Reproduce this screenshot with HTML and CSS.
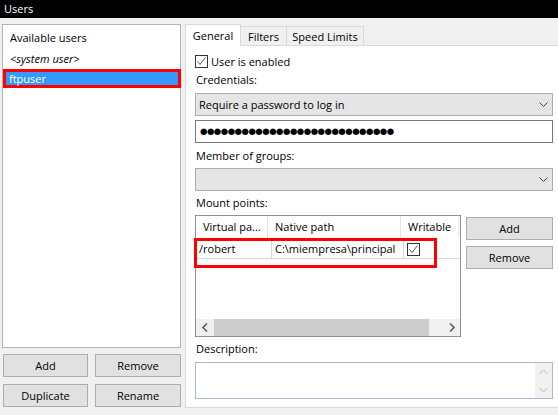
FILE: index.html
```html
<!DOCTYPE html>
<html>
<head>
<meta charset="utf-8">
<link rel="stylesheet" href="styles.css">
</head>
<body>
<div class="titlebar">Users</div>
<div class="main">
  <div class="left">
    <div class="userlist">
      <div class="user-head">Available users</div>
      <div class="user-item italic">&lt;system user&gt;</div>
      <div class="user-item selected">ftpuser</div>
    </div>
    <div class="btngrid">
      <div class="btn">Add</div>
      <div class="btn">Remove</div>
      <div class="btn">Duplicate</div>
      <div class="btn">Rename</div>
    </div>
  </div>
  <div class="right">
    <div class="tabs">
      <div class="tab active">General</div>
      <div class="tab t-filters">Filters</div>
      <div class="tab t-speed">Speed Limits</div>
    </div>
    <div class="panel">
      <div class="chkrow">
        <span class="chk"><svg width="11" height="11" viewBox="0 0 11 11"><polyline points="1.5,5.5 4,8.5 9.5,1.5" fill="none" stroke="#555" stroke-width="1"/></svg></span>
        <span>User is enabled</span>
      </div>
      <div class="label l-cred">Credentials:</div>
      <div class="combo c-first"><span>Require a password to log in</span><svg class="chev" width="9" height="5" viewBox="0 0 9 5"><polyline points="0.5,0.5 4.5,4.5 8.5,0.5" fill="none" stroke="#444" stroke-width="1"/></svg></div>
      <div class="password">●●●●●●●●●●●●●●●●●●●●●●●●●●●●</div>
      <div class="label l-groups">Member of groups:</div>
      <div class="combo c-second"><span></span><svg class="chev" width="9" height="5" viewBox="0 0 9 5"><polyline points="0.5,0.5 4.5,4.5 8.5,0.5" fill="none" stroke="#444" stroke-width="1"/></svg></div>
      <div class="label l-mount">Mount points:</div>
      <div class="mountrow">
        <div class="listview">
          <div class="lv-head">
            <div class="hc hc1">Virtual pa...</div>
            <div class="hc hc2">Native path</div>
            <div class="hc hc3">Writable</div>
          </div>
          <div class="lv-row">
            <div class="rc rc1">/robert</div>
            <div class="rc rc2">C:\miempresa\principal</div>
            <div class="rc rc3"><span class="chk"><svg width="11" height="11" viewBox="0 0 11 11"><polyline points="1.5,5.5 4,8.5 9.5,1.5" fill="none" stroke="#555" stroke-width="1"/></svg></span></div>
          </div>
          <div class="hscroll">
            <div class="sb-arrow"><svg width="6" height="9" viewBox="0 0 6 9"><polyline points="5,0.5 1,4.5 5,8.5" fill="none" stroke="#606060" stroke-width="1.6"/></svg></div>
            <div class="sb-thumb"></div>
            <div class="sb-track"></div>
            <div class="sb-arrow"><svg width="6" height="9" viewBox="0 0 6 9"><polyline points="1,0.5 5,4.5 1,8.5" fill="none" stroke="#606060" stroke-width="1.6"/></svg></div>
          </div>
          <div class="mark-row"></div>
        </div>
        <div class="sidebtns">
          <div class="btn b-add">Add</div>
          <div class="btn b-remove">Remove</div>
        </div>
      </div>
      <div class="label l-desc">Description:</div>
      <div class="textarea">
        <div class="ta-body"></div>
        <div class="vscroll">
          <svg width="9" height="6" viewBox="0 0 9 6"><polyline points="0.5,5 4.5,1 8.5,5" fill="none" stroke="#b8b8b8" stroke-width="1"/></svg>
          <svg width="9" height="6" viewBox="0 0 9 6"><polyline points="0.5,1 4.5,5 8.5,1" fill="none" stroke="#b8b8b8" stroke-width="1"/></svg>
        </div>
      </div>
    </div>
  </div>
</div>
</body>
</html>
```
FILE: styles.css
```css
* { box-sizing: border-box; }
html, body { margin: 0; padding: 0; }
body {
  width: 558px;
  height: 415px;
  overflow: hidden;
  background: #f0f0f0;
  font-family: "Open Sans", "Noto Sans", sans-serif;
  font-size: 11px;
  color: #000;
}
.titlebar {
  height: 18px;
  line-height: 18px;
  background: #000;
  color: #fff;
  padding-left: 4px;
}
.main {
  display: flex;
  gap: 4px;
  padding: 6px 0 0 2px;
}
.left {
  width: 180px;
  display: flex;
  flex-direction: column;
}
.userlist {
  height: 324px;
  background: #fff;
  border: 1px solid #b4b4b4;
  padding-top: 2px;
}
.user-head {
  height: 22px;
  line-height: 22px;
  padding-left: 7px;
}
.user-item {
  height: 20px;
  line-height: 20px;
  padding-left: 7px;
}
.italic { font-style: italic; }
.user-item.selected {
  height: 19px;
  line-height: 13px;
  border: 3px solid #ff0000;
  background: #3399ff;
  color: #fff;
  padding-left: 3px;
  margin-right: -1px;
}
.btngrid {
  display: grid;
  grid-template-columns: 85px 86px;
  grid-auto-rows: 23px;
  column-gap: 7px;
  row-gap: 7px;
  margin-top: 6px;
  padding-left: 1px;
}
.btn {
  background: #e1e1e1;
  border: 1px solid #adadad;
  display: flex;
  align-items: center;
  justify-content: center;
}
.right {
  width: 380px;
  flex: none;
}
.tabs {
  display: flex;
  align-items: flex-end;
  height: 22px;
}
.tab {
  height: 20px;
  line-height: 19px;
  text-align: center;
  background: #f0f0f0;
  border-top: 1px solid #d9d9d9;
  border-right: 1px solid #d9d9d9;
}
.tab.active {
  height: 22px;
  line-height: 21px;
  width: 56px;
  background: #fff;
  border-left: 1px solid #d9d9d9;
  position: relative;
  z-index: 2;
}
.t-filters { width: 46px; }
.t-speed { width: 77px; }
.panel {
  position: relative;
  z-index: 1;
  margin-top: -1px;
  height: 363px;
  background: #fff;
  border: 1px solid #d9d9d9;
  padding: 0 11px 0 9px;
}
.chkrow {
  margin-top: 7px;
  height: 16px;
  display: flex;
  align-items: center;
  gap: 3px;
}
.chk {
  width: 13px;
  height: 13px;
  border: 1px solid #333;
  background: #fff;
  display: inline-flex;
  align-items: center;
  justify-content: center;
}
.label {
  height: 16px;
  line-height: 16px;
  padding-left: 1px;
}
.l-cred { margin-top: 3px; }
.l-groups { margin-top: 5px; }
.l-mount { margin-top: 4px; }
.l-desc { margin-top: 4px; }
.combo {
  height: 23px;
  background: #e5e5e5;
  border: 1px solid #adadad;
  display: flex;
  align-items: center;
  justify-content: space-between;
  padding: 0 4px 0 3px;
}
.c-first { margin-top: 5px; }
.c-second { margin-top: 4px; }
.password {
  margin-top: 4px;
  height: 23px;
  border: 1px solid #7a7a7a;
  background: #fff;
  font-family: "DejaVu Sans", sans-serif;
  font-size: 8.5px;
  line-height: 21px;
  padding-left: 4px;
  letter-spacing: -0.5px;
}
.mountrow {
  margin-top: 4px;
  display: flex;
  gap: 5px;
}
.listview {
  position: relative;
  width: 266px;
  height: 122px;
  border: 1px solid #8f8f8f;
  display: flex;
  flex-direction: column;
}
.lv-head {
  display: flex;
  height: 22px;
}
.hc {
  line-height: 22px;
  padding-left: 7px;
  border-right: 1px solid #e5e5e5;
  white-space: nowrap;
  overflow: hidden;
}
.hc1 { width: 72px; }
.hc2 { width: 133px; }
.hc3 { width: 58px; }
.lv-row {
  display: flex;
  height: 21px;
  border-bottom: 1px solid #d6d6d6;
}
.rc {
  line-height: 18px;
  padding-top: 2px;
  border-right: 1px solid #d6d6d6;
  white-space: nowrap;
  overflow: hidden;
}
.rc1 { width: 76px; padding-left: 3px; }
.rc2 { width: 132px; padding-left: 3px; }
.rc3 { width: 55px; border-right: none; display: flex; align-items: center; padding-left: 3px; padding-top: 3px; }
.hscroll {
  margin-top: auto;
  height: 17px;
  display: flex;
  background: #f0f0f0;
}
.sb-arrow {
  width: 17px;
  display: flex;
  align-items: center;
  justify-content: center;
}
.sb-arrow:first-child { width: 18px; }
.sb-thumb {
  width: 215px;
  background: #cdcdcd;
}
.sb-track { flex: 1; }
.mark-row {
  position: absolute;
  left: -2px;
  top: 22px;
  width: 243px;
  height: 30px;
  border: 3px solid #ff0000;
}
.sidebtns {
  width: 87px;
  display: flex;
  flex-direction: column;
  gap: 6px;
  padding-top: 2px;
}
.sidebtns .btn { height: 23px; }
.textarea {
  margin-top: 5px;
  height: 37px;
  border: 1px solid #a7bad0;
  display: flex;
  background: #fff;
}
.ta-body { flex: 1; }
.vscroll {
  width: 17px;
  background: #f0f0f0;
  display: flex;
  flex-direction: column;
  align-items: center;
  justify-content: space-between;
  padding: 6px 0 5px;
}
```
